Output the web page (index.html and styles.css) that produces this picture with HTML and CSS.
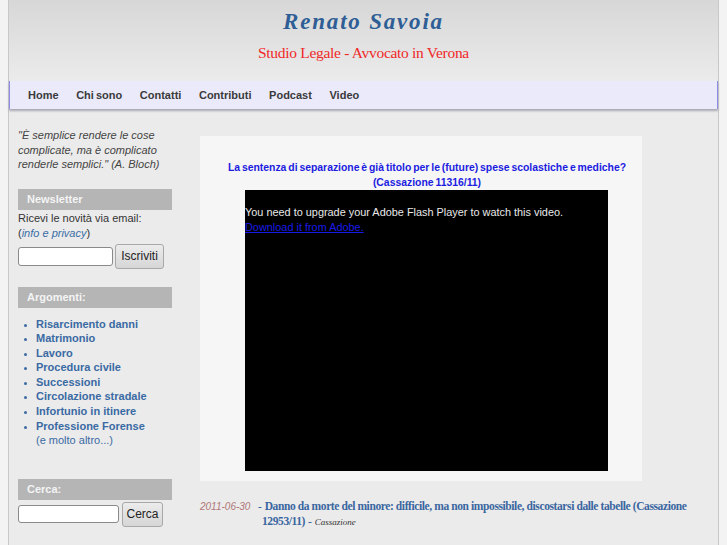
FILE: index.html
```html
<!DOCTYPE html>
<html lang="it">
<head>
<meta charset="utf-8">
<title>Renato Savoia - Studio Legale</title>
<link rel="stylesheet" href="styles.css">
</head>
<body>
<div class="page">
  <header class="header">
    <h1 class="site-title">Renato Savoia</h1>
    <p class="site-sub">Studio Legale - Avvocato in Verona</p>
  </header>
  <nav class="nav">
    <a href="#">Home</a>
    <a href="#">Chi sono</a>
    <a href="#">Contatti</a>
    <a href="#">Contributi</a>
    <a href="#">Podcast</a>
    <a href="#">Video</a>
  </nav>
  <div class="content">
    <aside class="sidebar">
      <p class="quote">"È semplice rendere le cose complicate, ma è complicato renderle semplici." (A. Bloch)</p>
      <h2 class="side-head">Newsletter</h2>
      <p class="side-text">Ricevi le novità via email:<br>(<a href="#" class="privacy">info e privacy</a>)</p>
      <form class="side-form news-form">
        <input type="text" class="field">
        <button type="button" class="btn">Iscriviti</button>
      </form>
      <h2 class="side-head arg-head">Argomenti:</h2>
      <ul class="topics">
        <li><a href="#">Risarcimento danni</a></li>
        <li><a href="#">Matrimonio</a></li>
        <li><a href="#">Lavoro</a></li>
        <li><a href="#">Procedura civile</a></li>
        <li><a href="#">Successioni</a></li>
        <li><a href="#">Circolazione stradale</a></li>
        <li><a href="#">Infortunio in itinere</a></li>
        <li><a href="#">Professione Forense</a></li>
      </ul>
      <a href="#" class="more">(e molto altro...)</a>
      <h2 class="side-head cerca-head">Cerca:</h2>
      <form class="side-form search-form">
        <input type="text" class="field field-search">
        <button type="button" class="btn btn-search">Cerca</button>
      </form>
    </aside>
    <main class="main">
      <section class="video-box">
        <h3 class="video-title">La sentenza di separazione è già titolo per le (future) spese scolastiche e mediche?<br>(Cassazione 11316/11)</h3>
        <div class="player">
          <p>You need to upgrade your Adobe Flash Player to watch this video.<br><a href="#">Download it from Adobe.</a></p>
        </div>
      </section>
      <div class="post">
        <span class="post-date">2011-06-30</span>
        <p class="post-text">- <a href="#">Danno da morte del minore: difficile, ma non impossibile, discostarsi dalle tabelle (Cassazione 12953/11)</a> - <em class="post-cat">Cassazione</em></p>
      </div>
    </main>
  </div>
</div>
</body>
</html>
```
FILE: styles.css
```css
html, body {
  margin: 0;
  padding: 0;
}
body {
  background: #f3f3f3;
  font-family: "Liberation Sans", Arial, sans-serif;
  height: 545px;
  overflow: hidden;
}
.page {
  margin: 0 8px;
  border-left: 1px solid #c8c8c8;
  border-right: 1px solid #c8c8c8;
  background: #ebebeb;
  min-height: 545px;
}
.header {
  height: 81px;
  background: linear-gradient(#d7d7d7 0%, #e2e2e2 55%, #ebebeb 100%);
  text-align: center;
  overflow: hidden;
}
.site-title {
  margin: 0;
  padding-top: 9px;
  font-family: "Liberation Serif", "Times New Roman", serif;
  font-style: italic;
  font-weight: bold;
  font-size: 23px;
  line-height: 26px;
  letter-spacing: 1.8px;
  color: #2e5e95;
}
.site-sub {
  margin: 9px 0 0;
  font-family: "Liberation Serif", "Times New Roman", serif;
  font-size: 15.5px;
  line-height: 18px;
  letter-spacing: -0.3px;
  color: #f02828;
}
.nav {
  height: 27px;
  background: #eaeafb;
  border-left: 1px solid #8d8de8;
  border-right: 1px solid #8d8de8;
  box-shadow: 0 2px 2px #a9a9b3;
  display: flex;
  align-items: center;
  padding-left: 18px;
  padding-bottom: 1px;
  box-sizing: content-box;
}
.nav a {
  font-size: 11px;
  font-weight: bold;
  color: #3a3a3a;
  text-decoration: none;
  margin-right: 17.6px;
  word-spacing: -1px;
}
.content {
  display: flex;
  align-items: flex-start;
}
.sidebar {
  width: 154px;
  margin-left: 9px;
  padding-top: 19px;
  flex: none;
}
.quote {
  margin: 0;
  font-size: 11px;
  line-height: 14.5px;
  font-style: italic;
  color: #444;
}
.side-head {
  margin: 0;
  height: 21px;
  line-height: 21px;
  background: #b5b5b5;
  color: #f4f4f4;
  font-size: 11px;
  font-weight: bold;
  padding-left: 9px;
}
.quote + .side-head {
  margin-top: 17px;
}
.side-text {
  margin: 1px 0 0;
  font-size: 11px;
  line-height: 15px;
  color: #333;
}
.privacy {
  color: #3a6ea5;
  font-style: italic;
  text-decoration: none;
}
.side-form {
  display: flex;
  align-items: center;
  gap: 2px;
}
.news-form {
  margin-top: 3px;
}
.field {
  box-sizing: border-box;
  width: 95px;
  height: 19px;
  border: 1px solid #8a8a8a;
  border-radius: 3px;
  background: #fff;
  margin: 0;
  padding: 0;
}
.btn {
  box-sizing: border-box;
  height: 25px;
  width: 49px;
  margin: 0;
  padding: 0;
  border: 1px solid #a8a8a8;
  border-radius: 3px;
  background: linear-gradient(#ececec, #d6d6d6);
  font-family: "Liberation Sans", Arial, sans-serif;
  font-size: 12px;
  color: #222;
}
.arg-head {
  margin-top: 18px;
}
.topics {
  margin: 9px 0 0;
  padding: 0 0 0 18px;
  font-size: 11px;
  line-height: 14.6px;
  color: #3a6aa3;
}
.topics li {
  margin: 0;
}
.topics li::marker {
  font-size: 9px;
}
.topics a {
  color: #3a6aa3;
  font-weight: bold;
  text-decoration: none;
}
.more {
  display: block;
  margin-left: 18px;
  font-size: 11px;
  line-height: 14.6px;
  color: #3a6aa3;
  text-decoration: none;
}
.cerca-head {
  margin-top: 31px;
}
.search-form {
  margin-top: 2px;
  gap: 3px;
}
.field-search {
  width: 101px;
  height: 18px;
}
.btn-search {
  width: 41px;
}
.main {
  margin-left: 28px;
  padding-top: 27px;
  width: 520px;
}
.video-box {
  width: 442px;
  height: 345px;
  box-sizing: border-box;
  background: #f6f6f6;
  padding-top: 24px;
}
.video-title {
  margin: 0;
  padding-left: 12px;
  text-align: center;
  font-size: 10.4px;
  line-height: 15px;
  font-weight: bold;
  color: #1c1ce0;
  word-spacing: -1px;
}
.player {
  margin: 0 0 0 45px;
  width: 363px;
  height: 281px;
  background: #000;
}
.player p {
  margin: 0;
  padding-top: 15px;
  font-size: 10.9px;
  line-height: 15px;
  color: #e8e8e8;
}
.player a {
  color: #1a1ae8;
}
.post {
  display: flex;
  margin-top: 18px;
  align-items: flex-start;
}
.post-date {
  flex: none;
  width: 58px;
  font-size: 10px;
  line-height: 15px;
  font-style: italic;
  color: #b07878;
}
.post-text {
  margin: 0;
  width: 470px;
  padding-left: 4px;
  text-indent: -4px;
  font-family: "Liberation Serif", "Times New Roman", serif;
  font-size: 11.5px;
  line-height: 15px;
  color: #3a66a0;
}
.post-text a {
  color: #3a66a0;
  font-weight: bold;
  text-decoration: none;
  letter-spacing: -0.4px;
}
.post-cat {
  font-size: 9px;
  color: #333;
}
```
